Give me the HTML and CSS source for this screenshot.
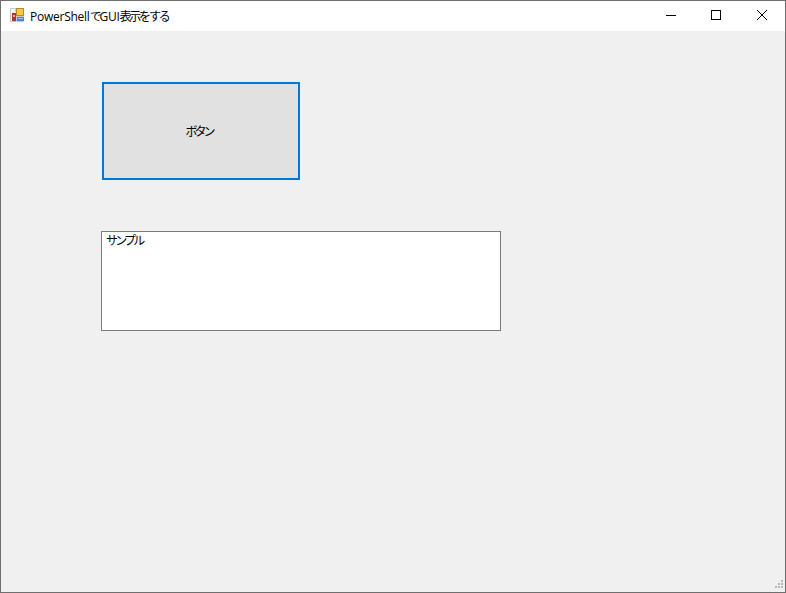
FILE: index.html
```html
<!DOCTYPE html>
<html lang="ja">
<head>
  <meta charset="UTF-8" />
  <meta name="viewport" content="width=device-width, initial-scale=1.0" />
  <title>PowerShellでGUI表示をする</title>
  <link rel="stylesheet" href="styles.css">
</head>
<body>
  <div class="window">
    <div class="titlebar">
      <svg class="app-icon" width="16" height="16" viewBox="0 0 16 16">
        <rect x="0" y="0" width="14" height="14" fill="#c9c9c9" />
        <rect x="1" y="1" width="4" height="3" fill="#f4f4f4" />
        <rect x="1" y="4" width="5" height="9" fill="#f2f2f2" />
        <rect x="2" y="5" width="4" height="8" fill="#b5322a" />
        <rect x="3" y="7" width="2" height="2" fill="#e8b0a0" />
        <rect x="6" y="0" width="8" height="8" fill="#b8892a" />
        <rect x="7" y="1" width="6" height="6" fill="#f6c83c" />
        <rect x="7" y="9" width="7" height="4" fill="#4a82d6" />
        <rect x="8" y="10" width="5" height="1" fill="#a9c6f0" />
      </svg>
      <span class="title">PowerShell<span class="jp">で</span>GUI<span class="jp">表示をする</span></span>
      <div class="caption-buttons">
        <div class="caption-btn">
          <svg width="12" height="12" viewBox="0 0 12 12"><path d="M2 6.5H12" stroke="#000" fill="none" /></svg>
        </div>
        <div class="caption-btn">
          <svg width="12" height="12" viewBox="0 0 12 12"><rect x="1.5" y="1.5" width="9" height="9" stroke="#000" fill="none" /></svg>
        </div>
        <div class="caption-btn">
          <svg width="12" height="12" viewBox="0 0 12 12"><path d="M1 1L11 11M11 1L1 11" stroke="#000" fill="none" /></svg>
        </div>
      </div>
    </div>
    <div class="client">
      <button class="sample-button">ボタン</button>
      <textarea class="sample-text">サンプル</textarea>
    </div>
    <!-- resize grip -->
    <svg class="grip" width="12" height="12" viewBox="0 0 12 12" fill="#b8b8b8">
      <rect x="8" y="0" width="2" height="2" />
      <rect x="5" y="3" width="2" height="2" />
      <rect x="8" y="3" width="2" height="2" />
      <rect x="2" y="6" width="2" height="2" />
      <rect x="5" y="6" width="2" height="2" />
      <rect x="8" y="6" width="2" height="2" />
    </svg>
  </div>
</body>
</html>
```

FILE: styles.css
```css
html, body {
  margin: 0;
  padding: 0;
  height: 100%;
}
body {
  font-family: "Open Sans", "Noto Sans CJK JP", sans-serif;
  font-size: 12px;
  color: #000;
  overflow: hidden;
}
.window {
  position: relative;
  box-sizing: border-box;
  width: 786px;
  height: 593px;
  border: 1px solid #6f6f6f;
  background-color: #f0f0f0;
  display: flex;
  flex-direction: column;
}
.titlebar {
  display: flex;
  align-items: center;
  height: 30px;
  background-color: #fff;
  padding-left: 9px;
}
.app-icon {
  margin-right: 4px;
  margin-top: -1px;
}
.title {
  font-size: 12px;
  white-space: nowrap;
  color: #000;
  letter-spacing: -0.25px;
}
.title .jp {
  letter-spacing: -2.2px;
}
.caption-buttons {
  display: flex;
  margin-left: auto;
}
.caption-btn {
  width: 46px;
  height: 30px;
  display: flex;
  align-items: center;
  justify-content: center;
}
.caption-btn svg {
  margin-top: -2px;
}
.client {
  flex: 1;
  display: flex;
  flex-direction: column;
  align-items: flex-start;
  padding: 51px 0 0 100px;
}
.sample-button {
  box-sizing: border-box;
  width: 198px;
  height: 98px;
  margin-left: 1px;
  border: 2px solid #0078d7;
  background-color: #e1e1e1;
  font-family: "Noto Sans CJK JP", sans-serif;
  font-size: 12px;
  letter-spacing: -3px;
  color: #000;
  padding: 0 4px 2px 0;
}
.sample-text {
  box-sizing: border-box;
  width: 400px;
  height: 100px;
  margin-top: 51px;
  border: 1px solid #7a7a7a;
  background-color: #fff;
  font-family: "Noto Sans CJK JP", sans-serif;
  font-size: 12px;
  letter-spacing: -2.8px;
  line-height: 15px;
  color: #000;
  padding: 0 4px;
  resize: none;
  outline: none;
}
.grip {
  position: absolute;
  right: 0;
  bottom: 0;
}
```
